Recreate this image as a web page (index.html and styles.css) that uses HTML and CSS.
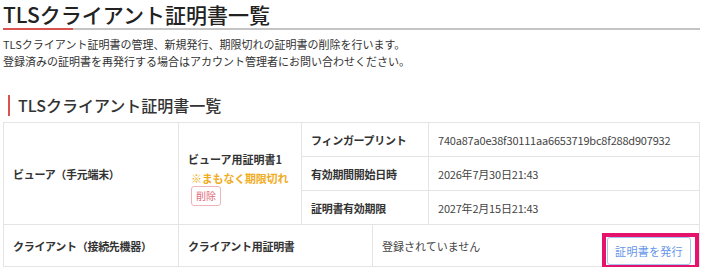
FILE: index.html
```html
<!DOCTYPE html>
<html lang="ja">
<head>
<meta charset="utf-8">
<title>TLSクライアント証明書一覧</title>
<link rel="stylesheet" href="styles.css">
</head>
<body>
<div class="page">
  <h1 class="page-title">TLSクライアント証明書一覧</h1>
  <p class="lead">TLSクライアント証明書の管理、新規発行、期限切れの証明書の削除を行います。<br>登録済みの証明書を再発行する場合はアカウント管理者にお問い合わせください。</p>
  <h2 class="section-title">TLSクライアント証明書一覧</h2>
  <div class="cert-table">
    <div class="block block-viewer">
      <div class="cell head span3">ビューア（手元端末）</div>
      <div class="cell cert span3">
        <div class="cert-name">ビューア用証明書1</div>
        <div class="cert-sub">
          <div class="warn">※まもなく期限切れ</div>
          <button class="btn-delete" type="button">削除</button>
        </div>
      </div>
      <div class="cell head">フィンガープリント</div>
      <div class="cell value">740a87a0e38f30111aa6653719bc8f288d907932</div>
      <div class="cell head">有効期間開始日時</div>
      <div class="cell value">2026年7月30日21:43</div>
      <div class="cell head">証明書有効期限</div>
      <div class="cell value">2027年2月15日21:43</div>
    </div>
    <div class="block block-client">
      <div class="cell head">クライアント（接続先機器）</div>
      <div class="cell head">クライアント用証明書</div>
      <div class="cell value split">
        <span class="plain">登録されていません</span>
        <span class="highlight"><button class="btn-issue" type="button">証明書を発行</button></span>
      </div>
    </div>
  </div>
</div>
</body>
</html>
```

FILE: styles.css
```css
html, body {
  margin: 0;
  padding: 0;
  background: #fff;
}
body {
  font-family: "Noto Sans CJK JP", "Noto Sans", sans-serif;
  color: #333;
}
.page {
  padding: 0 4px 0 3px;
}
.page-title {
  margin: 0;
  font-size: 21px;
  line-height: 26px;
  font-weight: 500;
  color: #222;
  padding: 1px 0 3px;
  background: linear-gradient(to right, #d9534f 70px, #c4c4c4 70px) left bottom / 100% 2px no-repeat;
}
.lead {
  margin: 6px 0 0;
  font-size: 11px;
  line-height: 17px;
  color: #333;
}
.section-title {
  margin: 25px 0 6px 5px;
  padding-left: 8px;
  border-left: 2px solid #d9534f;
  font-size: 16px;
  line-height: 21px;
  font-weight: 500;
  color: #333;
}
.cert-table {
  border-top: 1px solid #e4e4e4;
  border-left: 1px solid #e4e4e4;
}
.block {
  display: grid;
}
.block-viewer {
  grid-template-columns: 175px 123px 127px 1fr;
  grid-template-rows: 34px 34px 34px;
}
.block-client {
  grid-template-columns: 175px 194px 1fr;
  grid-template-rows: 42px;
}
.cell {
  border-right: 1px solid #e4e4e4;
  border-bottom: 1px solid #e4e4e4;
  display: flex;
  align-items: center;
  padding: 0 9px;
  font-size: 11px;
  white-space: nowrap;
}
.span3 {
  grid-row: span 3;
}
.head {
  font-weight: 700;
  color: #333;
  letter-spacing: -0.3px;
}
.value {
  color: #444;
  letter-spacing: -0.2px;
}
.cert {
  flex-direction: column;
  align-items: flex-start;
  justify-content: center;
  padding-top: 9px;
}
.cert-name {
  font-weight: 700;
  line-height: 17px;
}
.cert-sub {
  padding-left: 3px;
}
.warn {
  margin-top: 3px;
  font-weight: 700;
  color: #f0ad1e;
  line-height: 15px;
  letter-spacing: -0.2px;
}
.btn-delete {
  display: block;
  font-family: inherit;
  font-size: 10px;
  line-height: 14px;
  color: #e06b78;
  background: #fff;
  border: 1px solid #efb3ba;
  border-radius: 3px;
  padding: 0;
  height: 20px;
  width: 30px;
}
.split {
  justify-content: space-between;
  padding-right: 0;
}
.plain {
  letter-spacing: 0;
}
.highlight {
  display: inline-flex;
  border: 4px solid #e6136c;
  padding: 0 4px 0 1px;
  margin-top: 10px;
}
.btn-issue {
  font-family: inherit;
  font-size: 11px;
  letter-spacing: 0.3px;
  color: #6596e6;
  background: #fff;
  border: 1px solid #a6c4f0;
  border-radius: 3px;
  height: 28px;
  width: 84px;
  padding: 0;
}
```
